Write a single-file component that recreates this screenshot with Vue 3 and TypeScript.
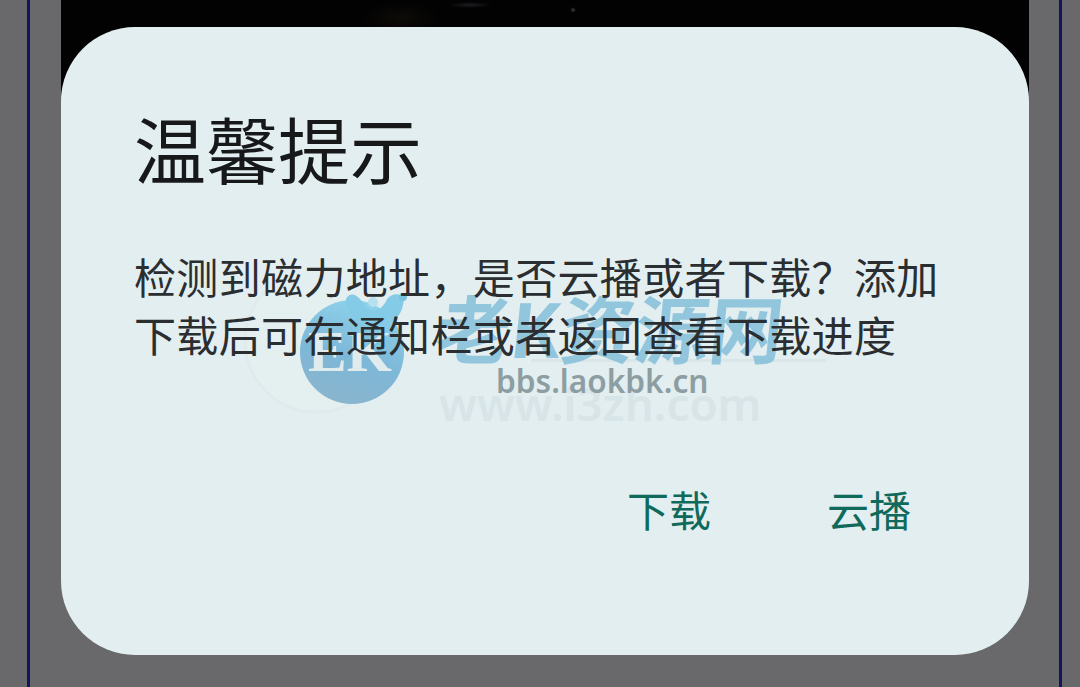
<script setup lang="ts">
const title = '温馨提示'
const lines = ['检测到磁力地址，是否云播或者下载？添加', '下载后可在通知栏或者返回查看下载进度']
const actions = ['下载', '云播']
</script>

<template>
  <div class="page">
    <div class="frame">
      <div class="stage">
        <section class="dialog">
          <h1 class="title">{{ title }}</h1>
          <div class="message">
            <p v-for="line in lines" :key="line">{{ line }}</p>
          </div>
          <div class="actions">
            <span v-for="a in actions" :key="a" class="action">{{ a }}</span>
          </div>
          <div class="mark">
            <svg class="mark-art" viewBox="0 0 600 130" width="600" height="130">
              <defs>
                <linearGradient id="ball" x1="0.65" y1="0" x2="0.35" y2="1">
                  <stop offset="0" stop-color="#8fd3ec" />
                  <stop offset="0.55" stop-color="#7db8d8" />
                  <stop offset="1" stop-color="#8ab4cd" />
                </linearGradient>
              </defs>
              <circle cx="75" cy="52" r="71" fill="#e6f0f0" stroke="#dfe9ea" stroke-width="3" opacity="0.6" />
              <rect x="290" y="70" width="120" height="3" fill="#d9e5e7" />
              <rect x="425" y="70" width="160" height="3" fill="#d9e5e7" />
              <circle cx="111" cy="63" r="52" fill="url(#ball)" />
              <path d="M105 10 C110 0 120 8 124 18 C132 26 142 20 146 10 C152 2 166 4 162 16 C160 28 148 40 130 38 C118 36 104 22 105 10 Z" fill="#84cbe7" />
              <circle cx="132" cy="13" r="5" fill="#b6e0ee" />
              <circle cx="162" cy="8" r="4" fill="#76c2e0" />
            </svg>
            <span class="mark-ek">EK</span>
            <span class="mark-name">老K资源网</span>
            <span class="mark-www">www.i3zh.com</span>
            <span class="mark-bbs">bbs.laokbk.cn</span>
          </div>
        </section>
      </div>
    </div>
  </div>
</template>

<style scoped>
.page {
  width: 1080px;
  height: 687px;
  overflow: hidden;
  background: #69696b;
  padding: 0 18px 0 27px;
  box-sizing: border-box;
}
.frame {
  height: 100%;
  box-sizing: border-box;
  border-left: 3px solid #14145e;
  border-right: 3px solid #14145e;
  padding: 0 30px 0 31px;
}
.stage {
  height: 100%;
  box-sizing: border-box;
  padding-top: 27px;
  background:
    radial-gradient(ellipse 22px 3px at 409px 5px, #1c1d20, transparent),
    radial-gradient(circle 3px at 512px 10px, #3a3c40, transparent),
    radial-gradient(ellipse 40px 16px at 340px 18px, #0e0b07, transparent),
    linear-gradient(#020203 0, #020203 96px, transparent 96px);
}
.dialog {
  position: relative;
  height: 628px;
  box-sizing: border-box;
  background: #e3eef0;
  border-radius: 74px;
  padding: 70px 73px 0;
  font-family: "Noto Sans CJK SC", "Noto Sans", sans-serif;
  overflow: hidden;
}
.title {
  margin: 0;
  font-size: 72px;
  line-height: 100px;
  font-weight: 400;
  color: #16181a;
  position: relative;
}
.message {
  margin-top: 50px;
  font-size: 42px;
  line-height: 58px;
  letter-spacing: 0.35px;
  color: #2b2e30;
}
.message p {
  margin: 0;
  position: relative;
  z-index: 2;
  white-space: nowrap;
}
.actions {
  position: absolute;
  z-index: 2;
  right: 118px;
  top: 452px;
  display: flex;
  gap: 116px;
}
.action {
  font-size: 42px;
  line-height: 60px;
  color: #0f6a5c;
}
.mark {
  position: absolute;
  left: 180px;
  top: 262px;
  width: 600px;
  height: 140px;
}
.mark-art {
  position: absolute;
  left: 0;
  top: 0;
}
.mark-ek {
  position: absolute;
  left: 67px;
  top: 34px;
  font-family: "Liberation Serif", serif;
  font-weight: 700;
  font-size: 58px;
  line-height: 58px;
  color: #e0ebee;
}
.mark-name {
  position: absolute;
  left: 196px;
  top: -5px;
  font-family: "Noto Sans CJK SC", sans-serif;
  font-weight: 700;
  font-size: 74px;
  line-height: 84px;
  color: #7dbdd8;
  opacity: 0.8;
  transform: skewX(-6deg);
  white-space: nowrap;
}
.mark-bbs {
  position: absolute;
  left: 255px;
  top: 72px;
  font-family: "Noto Sans", sans-serif;
  font-weight: 600;
  font-size: 31.6px;
  line-height: 40px;
  color: #8d9ea2;
}
.mark-www {
  position: absolute;
  left: 198px;
  top: 89px;
  font-family: "Noto Sans", sans-serif;
  font-weight: 600;
  font-size: 45.7px;
  line-height: 50px;
  color: #d8e5e8;
}
</style>
